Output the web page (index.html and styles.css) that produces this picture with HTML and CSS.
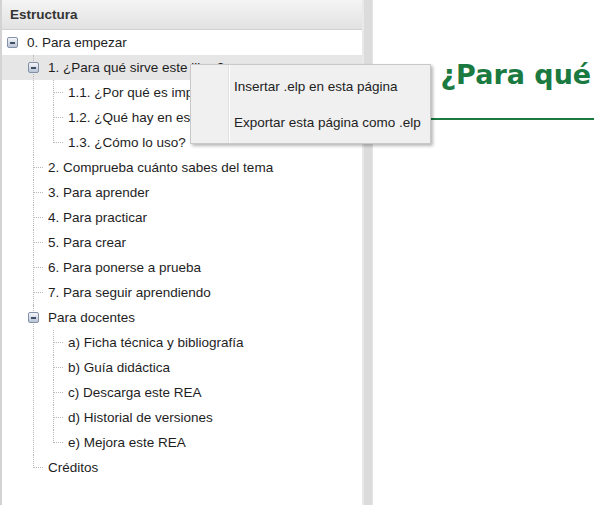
FILE: index.html
```html
<!DOCTYPE html>
<html lang="es">
<head>
<meta charset="utf-8">
<title>Estructura</title>
<link rel="stylesheet" href="styles.css">
</head>
<body>
<div class="app">
  <aside class="sidebar">
    <div class="panel-header">Estructura</div>
    <ul class="tree root">
      <li class="node">
        <div class="row"><span class="toggle"></span><span class="label">0. Para empezar</span></div>
        <ul class="tree">
          <li class="node">
            <div class="row selected"><span class="toggle"></span><span class="label">1. ¿Para qué sirve este libro?</span></div>
            <ul class="tree">
              <li><div class="row"><span class="label leaf">1.1. ¿Por qué es importante?</span></div></li>
              <li><div class="row"><span class="label leaf">1.2. ¿Qué hay en este libro?</span></div></li>
              <li><div class="row"><span class="label leaf">1.3. ¿Cómo lo uso?</span></div></li>
            </ul>
          </li>
          <li><div class="row"><span class="label leaf">2. Comprueba cuánto sabes del tema</span></div></li>
          <li><div class="row"><span class="label leaf">3. Para aprender</span></div></li>
          <li><div class="row"><span class="label leaf">4. Para practicar</span></div></li>
          <li><div class="row"><span class="label leaf">5. Para crear</span></div></li>
          <li><div class="row"><span class="label leaf">6. Para ponerse a prueba</span></div></li>
          <li><div class="row"><span class="label leaf">7. Para seguir aprendiendo</span></div></li>
          <li class="node">
            <div class="row"><span class="toggle"></span><span class="label">Para docentes</span></div>
            <ul class="tree">
              <li><div class="row"><span class="label leaf">a) Ficha técnica y bibliografía</span></div></li>
              <li><div class="row"><span class="label leaf">b) Guía didáctica</span></div></li>
              <li><div class="row"><span class="label leaf">c) Descarga este REA</span></div></li>
              <li><div class="row"><span class="label leaf">d) Historial de versiones</span></div></li>
              <li><div class="row"><span class="label leaf">e) Mejora este REA</span></div></li>
            </ul>
          </li>
          <li><div class="row"><span class="label leaf">Créditos</span></div></li>
        </ul>
      </li>
    </ul>
  </aside>
  <div class="splitter"></div>
  <main class="content">
    <h1 class="page-title">1. ¿Para qué sirve este libro?</h1>
  </main>
</div>
<div class="context-menu">
  <div class="menu-item">Insertar .elp en esta página</div>
  <div class="menu-item">Exportar esta página como .elp</div>
</div>
</body>
</html>
```

FILE: styles.css
```css
html, body {
  margin: 0;
  padding: 0;
  background: #fff;
}

body {
  font-family: "Liberation Sans", Arial, sans-serif;
  font-size: 13.5px;
  color: #1e1e1e;
  width: 594px;
  height: 505px;
  overflow: hidden;
  position: relative;
}

.app {
  display: flex;
  height: 505px;
}

.sidebar {
  width: 362px;
  flex: none;
  box-sizing: border-box;
  border-left: 2px solid #d3d3d3;
  background: #fff;
  overflow: hidden;
}

.panel-header {
  height: 30px;
  box-sizing: border-box;
  padding-left: 8px;
  line-height: 29px;
  font-weight: bold;
  color: #333;
  background: linear-gradient(#f4f4f4, #e2e2e2);
  border-bottom: 1px solid #d2d2d2;
}

.tree {
  list-style: none;
  margin: 0;
  padding: 0;
}

.tree.root {
  padding-left: 10px;
}

.tree li {
  position: relative;
}

.tree .tree {
  margin-left: 21px;
}

.tree .tree .tree {
  margin-left: 20px;
}

.tree .tree > li::before {
  content: "";
  position: absolute;
  left: 0;
  top: 0;
  bottom: 0;
  border-left: 1px dotted #b8b8b8;
}

.tree .tree > li:last-child::before {
  bottom: auto;
  height: 13px;
}

.tree .tree > li::after {
  content: "";
  position: absolute;
  left: 0;
  top: 12px;
  width: 10px;
  border-top: 1px dotted #b8b8b8;
}

.tree .tree > li.node::after {
  display: none;
}

.row {
  height: 25px;
  display: flex;
  align-items: center;
  white-space: nowrap;
}

.row.selected {
  background: #e6e6e6;
  margin-left: -31px;
  padding-left: 31px;
}

.label.leaf {
  margin-left: 15px;
}

.toggle {
  position: relative;
  z-index: 1;
  box-sizing: border-box;
  width: 11px;
  height: 11px;
  margin-left: -5px;
  margin-right: 9px;
  border: 1px solid #8391a8;
  border-radius: 2px;
  background: linear-gradient(#f4f6fa, #b9c4d5);
  flex: none;
}

.toggle::after {
  content: "";
  position: absolute;
  left: 2px;
  top: 3.5px;
  width: 5px;
  height: 2px;
  background: #3f4f68;
}

.splitter {
  width: 11px;
  flex: none;
  box-sizing: border-box;
  background: #dcdcdc;
  border-left: 2px solid #e9e9e9;
  border-right: 1px solid #e4e4e4;
}

.content {
  flex: 1;
  min-width: 0;
  overflow: hidden;
}

.page-title {
  margin: 59px 0 0 0;
  padding: 0 0 28px 29px;
  font-family: "DejaVu Sans", sans-serif;
  font-size: 27px;
  line-height: 31px;
  font-weight: bold;
  color: #1b7a3f;
  white-space: nowrap;
  border-bottom: 2px solid #1b7a3f;
}

.context-menu {
  position: absolute;
  left: 190px;
  top: 64px;
  width: 241px;
  box-sizing: border-box;
  padding: 4px 0 2px 0;
  background: #f0f0f0;
  border: 1px solid #c8c8c8;
  box-shadow: 2px 2px 3px rgba(0, 0, 0, 0.28);
  z-index: 10;
}

.context-menu::before {
  content: "";
  position: absolute;
  left: 37px;
  top: 0;
  bottom: 0;
  width: 1px;
  background: #e0e0e0;
  border-right: 1px solid #fff;
}

.menu-item {
  height: 36px;
  line-height: 36px;
  padding-left: 43px;
  color: #222;
  white-space: nowrap;
}
```
